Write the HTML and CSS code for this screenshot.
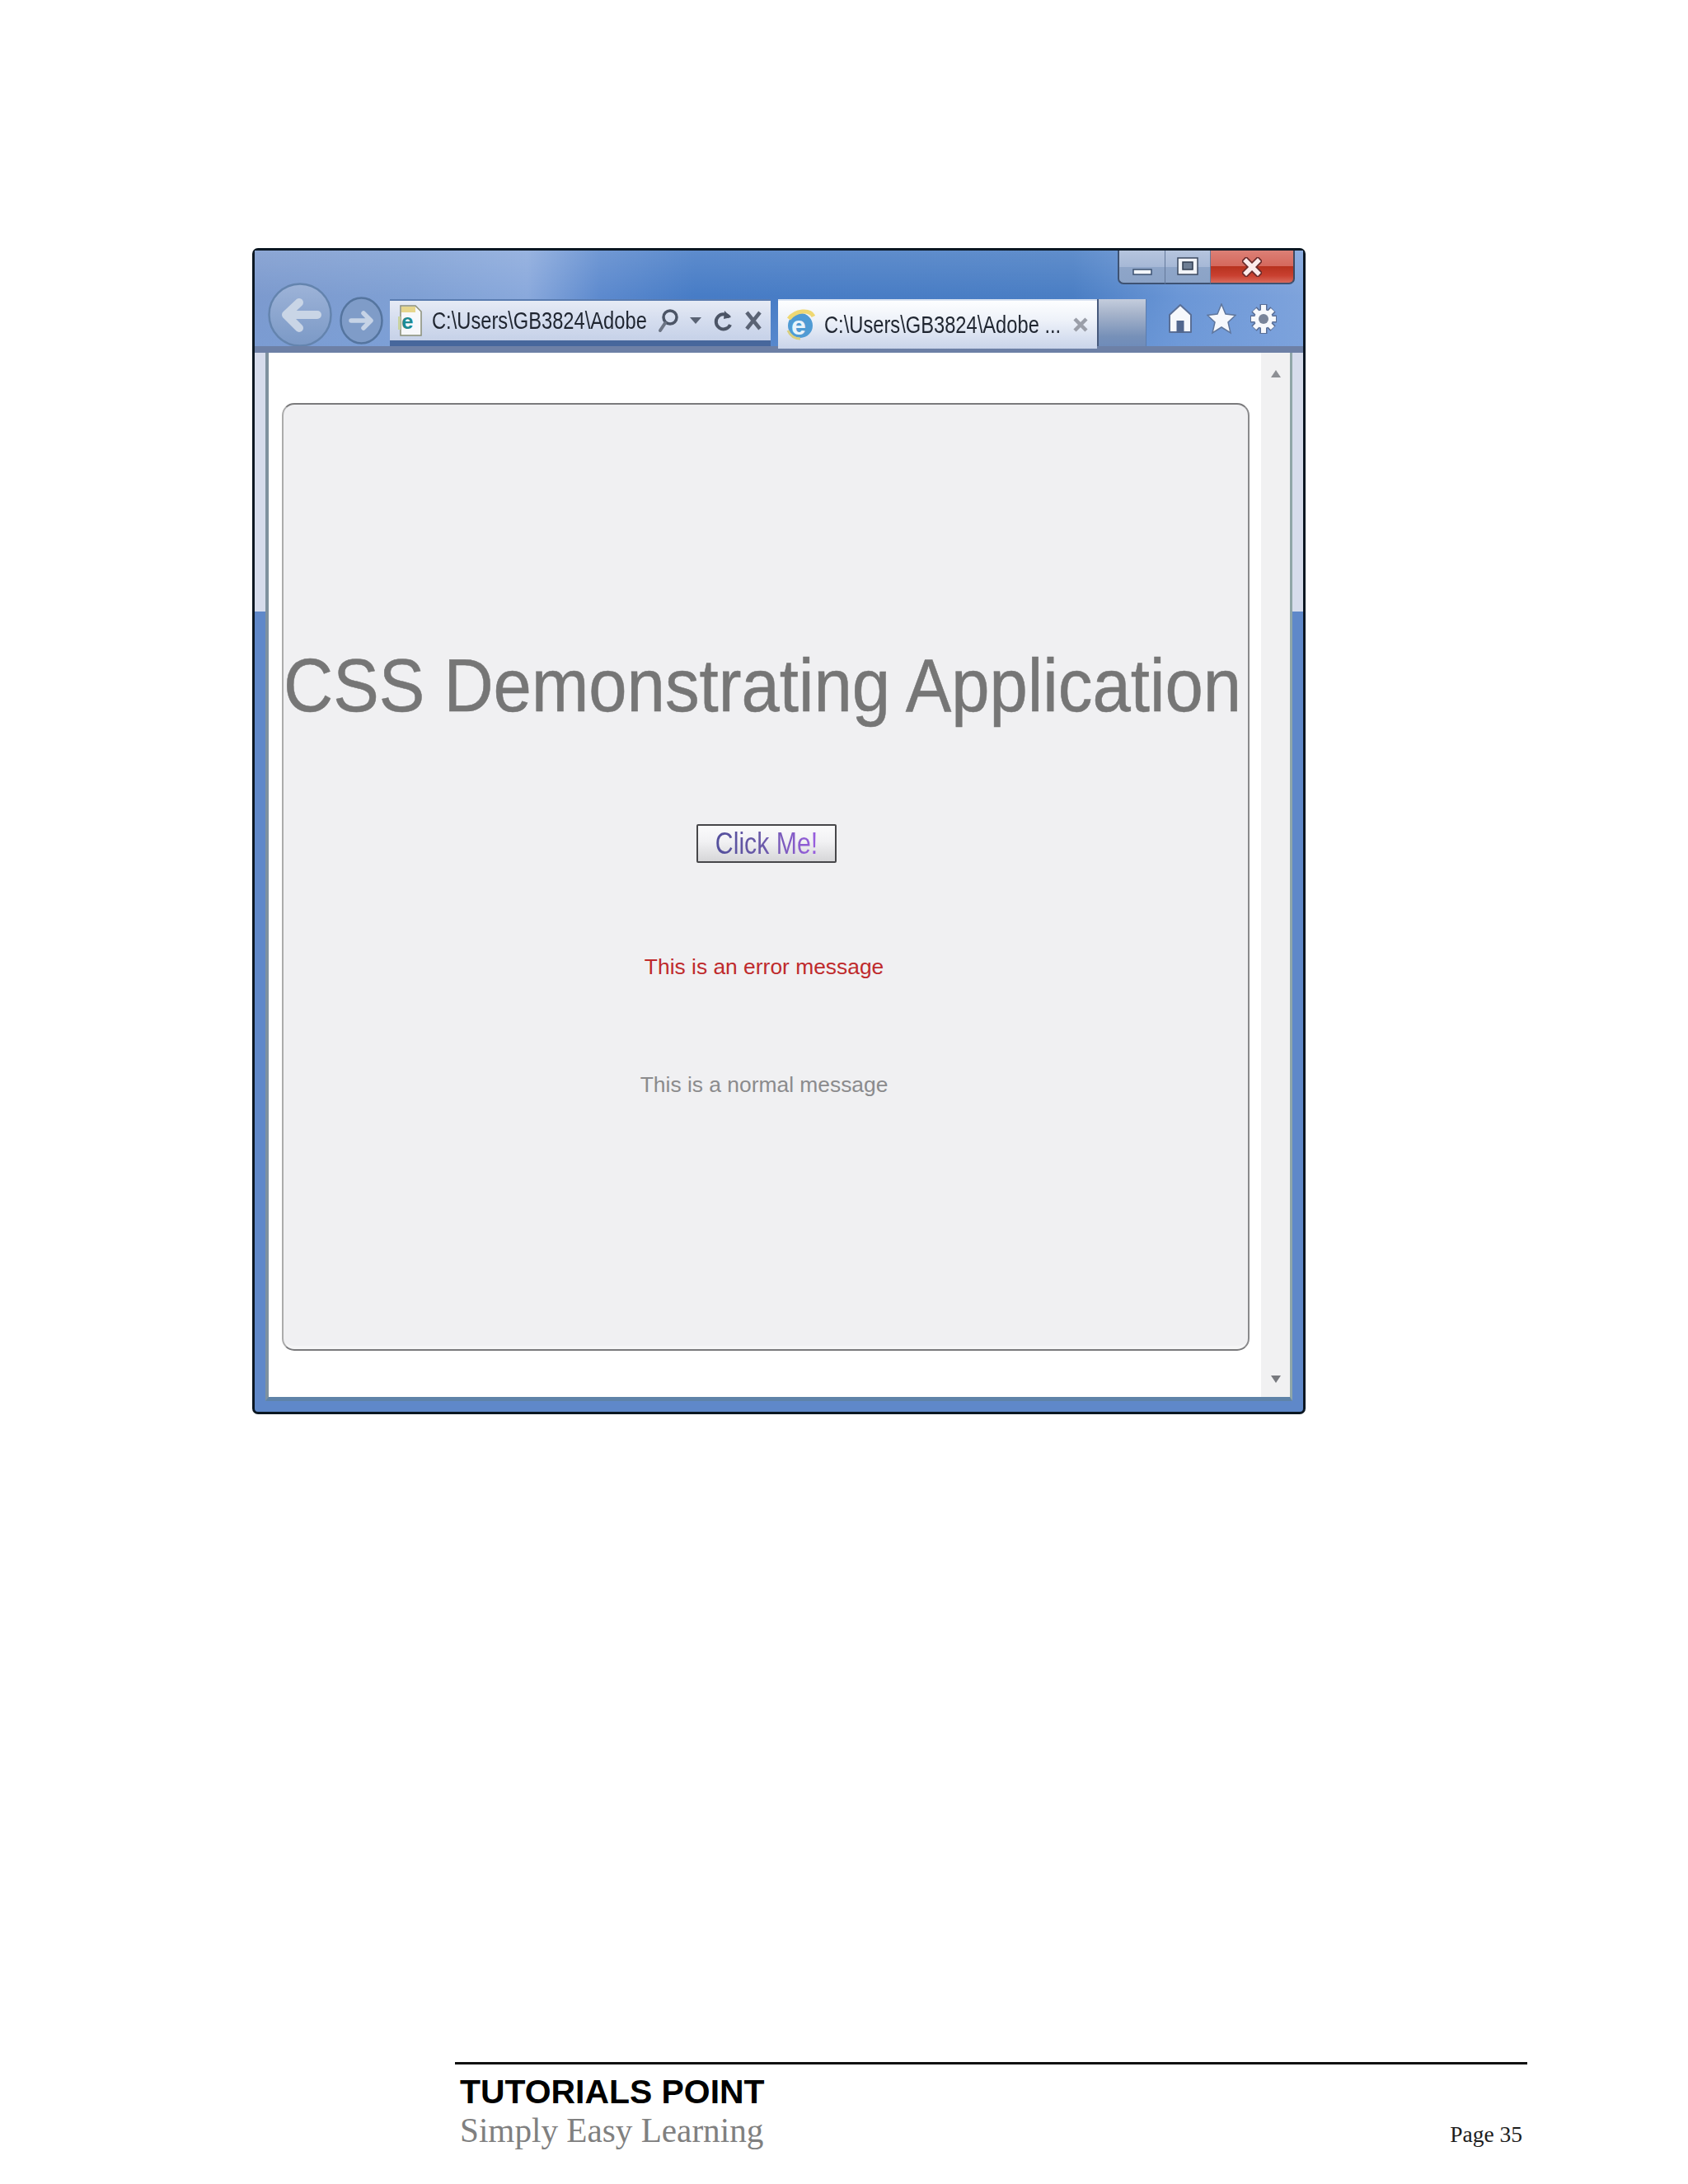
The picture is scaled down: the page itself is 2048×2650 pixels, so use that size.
FILE: index.html
```html
<!DOCTYPE html>
<html lang="en">
<head>
<meta charset="utf-8">
<title>TUTORIALS POINT - Page 35</title>
<link rel="stylesheet" href="styles.css">
</head>
<body>
<main class="page">
  <section class="window">
    <div class="chrome">
      <div class="caption">
        <div class="caption-btn min">
          <svg width="24" height="8" viewBox="0 0 24 8"><rect x="1" y="1" width="22" height="6" fill="#f2f6fb" stroke="#3c5272" stroke-width="1.5"/></svg>
        </div>
        <div class="caption-btn max">
          <svg width="26" height="22" viewBox="0 0 26 22"><rect x="1" y="1" width="24" height="20" fill="#f2f4f8" stroke="#3c4a60" stroke-width="1.5"/><rect x="7" y="6" width="12" height="9" fill="#6d7d93" stroke="#2f3c50" stroke-width="1.5"/></svg>
        </div>
        <div class="caption-btn close">
          <svg width="24" height="24" viewBox="0 0 24 24"><path d="M5 5 L19 19 M19 5 L5 19" stroke="#6a2a2a" stroke-width="9" stroke-linecap="square"/><path d="M5 5 L19 19 M19 5 L5 19" stroke="#fbeaea" stroke-width="5.5" stroke-linecap="square"/></svg>
        </div>
      </div>
      <div class="toolbar">
        <svg class="nav back" width="78" height="77" viewBox="0 0 78 77">
          <defs><linearGradient id="navfill" x1="0" y1="0" x2="0" y2="1"><stop offset="0" stop-color="#9db3d8"/><stop offset="1" stop-color="#7b99c6"/></linearGradient></defs>
          <circle cx="39" cy="39" r="37.5" fill="url(#navfill)" stroke="#6484ae" stroke-width="2.5"/>
          <path d="M60 39 H24 M38 24 L22 39 L38 55" fill="none" stroke="#c9d5e6" stroke-width="10" stroke-linecap="round" stroke-linejoin="round"/>
        </svg>
        <svg class="nav forward" width="53" height="58" viewBox="0 0 53 58">
          <ellipse cx="26.5" cy="29" rx="25" ry="27.5" fill="#7f9cc8" stroke="#55759f" stroke-width="2.5"/>
          <path d="M14 29 H37 M29 20 L38 29 L29 38" fill="none" stroke="#c6d3e6" stroke-width="5.5" stroke-linecap="round" stroke-linejoin="round"/>
        </svg>
        <div class="address">
          <svg class="page-icon" width="30" height="38" viewBox="0 0 30 38">
            <path d="M4 1 H22 L29 8 V37 H4 Z" fill="#f7f8fb" stroke="#8b8f78" stroke-width="1.5"/>
            <rect x="5" y="2" width="17" height="7" fill="#e6d68d"/>
            <path d="M1 14 L4 14 L4 30 L1 30 Z" fill="#c8d2a0"/>
            <text x="5" y="29" class="e-mark e-teal">e</text>
          </svg>
          <div class="addr-clip"><span class="squeezed">C:\Users\GB3824\Adobe</span></div>
          <svg class="ai search" width="26" height="30" viewBox="0 0 26 30"><circle cx="15" cy="11" r="8" fill="none" stroke="#4c5566" stroke-width="3.5"/><path d="M9 18 L3 27" stroke="#6c7484" stroke-width="4" stroke-linecap="round"/></svg>
          <svg class="ai drop" width="14" height="8" viewBox="0 0 14 8"><path d="M0 0 H14 L7 8 Z" fill="#5a6374"/></svg>
          <svg class="ai refresh" width="24" height="30" viewBox="0 0 24 30"><path d="M19 11 A9 9 0 1 0 20 20" fill="none" stroke="#4c5566" stroke-width="4"/><path d="M13 3 L21 11 L12 13 Z" fill="#4c5566"/></svg>
          <svg class="ai stop" width="22" height="26" viewBox="0 0 22 26"><path d="M3 3 L19 23 M19 3 L3 23" stroke="#5a6374" stroke-width="4.5"/></svg>
        </div>
        <div class="tab">
          <svg class="ie-icon" width="36" height="38" viewBox="0 0 36 38">
            <circle cx="18" cy="20" r="15" fill="#4f9bd4"/>
            <path d="M4 12 C12 1 30 0 34 9" fill="none" stroke="#efd873" stroke-width="5"/>
            <path d="M3 26 C6 33 12 36 18 36" fill="none" stroke="#d9cf7f" stroke-width="3"/>
            <text x="7" y="31" class="e-mark e-ie">e</text>
          </svg>
          <div class="tab-clip"><span class="squeezed">C:\Users\GB3824\Adobe ...</span></div>
          <svg class="tab-x" width="18" height="18" viewBox="0 0 18 18"><path d="M2 2 L16 16 M16 2 L2 16" stroke="#9a9ea8" stroke-width="4.5"/></svg>
        </div>
        <div class="new-tab"></div>
        <div class="tools">
          <svg width="34" height="40" viewBox="0 0 34 40"><path d="M17 3 L30 15 V36 H4 V15 Z" fill="#f6f8fc" stroke="#5a6f96" stroke-width="2" stroke-linejoin="round"/><rect x="12.5" y="22" width="9" height="15" fill="#51678f"/></svg>
          <svg width="36" height="38" viewBox="0 0 36 38"><path d="M18 1 L23 13 L35 14.5 L26 23 L29 36 L18 29 L7 36 L10 23 L1 14.5 L13 13 Z" fill="#f6f8fc" stroke="#5f769c" stroke-width="1.5"/></svg>
          <svg width="36" height="40" viewBox="0 0 36 40"><path d="M18 2 V38 M2 20 H34 M6.5 8.5 L29.5 31.5 M29.5 8.5 L6.5 31.5" stroke="#5a6f96" stroke-width="9"/><path d="M18 3 V37 M3 20 H33 M7 9 L29 31 M29 9 L7 31" stroke="#f6f8fc" stroke-width="6"/><circle cx="18" cy="20" r="11" fill="#f6f8fc"/><circle cx="18" cy="20" r="6" fill="#78849a"/></svg>
        </div>
      </div>
    </div>
    <div class="viewport">
      <div class="content">
        <div class="panel">
          <h1 class="title">CSS Demonstrating Application</h1>
          <button class="click" type="button"><span class="click-label">Click Me!</span></button>
          <p class="msg error">This is an error message</p>
          <p class="msg normal">This is a normal message</p>
        </div>
      </div>
      <div class="scrollbar">
        <svg width="12" height="9" viewBox="0 0 12 9"><path d="M6 0 L12 9 H0 Z" fill="#8d8f94"/></svg>
        <svg width="12" height="9" viewBox="0 0 12 9"><path d="M0 0 H12 L6 9 Z" fill="#77797e"/></svg>
      </div>
    </div>
  </section>
  <footer class="footer">
    <div class="brand">
      <div class="brand-name">TUTORIALS POINT</div>
      <div class="brand-tag">Simply Easy Learning</div>
    </div>
    <div class="page-no">Page 35</div>
  </footer>
</main>
</body>
</html>
```
FILE: styles.css
```css
* { box-sizing: border-box; }
html, body { margin: 0; padding: 0; background: #fff; }
body { width: 2048px; height: 2650px; overflow: hidden; font-family: "Liberation Sans", Arial, sans-serif; }
.page { padding: 301px 0 0 306px; }

.window {
  width: 1278px;
  height: 1415px;
  border: 3px solid #0b1722;
  border-radius: 7px;
  display: flex;
  flex-direction: column;
  background: linear-gradient(to bottom, #d6dcec 0, #d6dcec 438px, #5f88c9 438px, #5f88c9 100%);
}

.chrome {
  height: 124px;
  flex: none;
  background:
    linear-gradient(to bottom, rgba(255,255,255,.12) 0, rgba(255,255,255,0) 45%, rgba(120,160,220,.35) 100%),
    linear-gradient(to right, #7c9ace 0, #7fa0d4 15%, #8aa9dc 26%, #5d8ace 33%, #477cc6 42%, #4a7ec4 78%, #6a96d6 88%, #7ea3dc 100%);
}
.caption { height: 39px; display: flex; justify-content: flex-end; padding-right: 10px; }
.caption-btn {
  height: 41px;
  display: flex;
  justify-content: center;
  align-items: center;
  border-bottom: 2px solid #3e5272;
  border-right: 1px solid #64799b;
}
.caption-btn.min {
  width: 58px;
  padding-top: 12px;
  border-left: 2px solid #3e5272;
  border-bottom-left-radius: 7px;
  background: linear-gradient(to bottom, #b6c5de 0, #a6b8d6 50%, #8ea5c8 52%, #8ba3c7 100%);
}
.caption-btn.max {
  width: 55px;
  padding-bottom: 2px;
  background: linear-gradient(to bottom, #b6c5de 0, #a6b8d6 50%, #8ea5c8 52%, #8ba3c7 100%);
}
.caption-btn.close {
  width: 102px;
  border-right: 2px solid #3e4a60;
  border-bottom-right-radius: 7px;
  background: linear-gradient(to bottom, #dc8076 0, #d5685c 48%, #b8321f 50%, #c94030 78%, #d86a5c 100%);
}

.toolbar {
  height: 85px;
  display: flex;
  align-items: flex-start;
  padding-left: 16px;
  background: linear-gradient(to bottom, transparent 0, transparent 77px, #6d80a6 77px, #6d80a6 100%);
}
.nav { flex: none; display: block; }
.nav.forward { margin: 17px 0 0 9px; }
.address {
  width: 462px;
  height: 57px;
  margin: 20px 0 0 8px;
  display: flex;
  align-items: center;
  flex: none;
  border-top: 2px solid #5a7cb0;
  border-bottom: 7px solid #47679c;
  background: linear-gradient(to bottom, #e6ebf5 0, #d6deef 45%, #c6d1e8 100%);
}
.page-icon { margin-left: 9px; flex: none; }
.e-mark { font-family: "Liberation Sans", Arial, sans-serif; font-weight: 700; }
.e-teal { font-size: 26px; fill: #1d8a92; }
.e-ie { font-size: 32px; fill: #e9f4fb; }
.addr-clip { width: 262px; margin-left: 12px; overflow: hidden; flex: none; }
.squeezed {
  display: inline-block;
  font-size: 30px;
  line-height: 36px;
  color: #1f2530;
  white-space: nowrap;
  transform: scaleX(.79);
  transform-origin: left center;
}
.ai { flex: none; }
.search { margin-left: 12px; }
.drop { margin-left: 13px; }
.refresh { margin-left: 15px; }
.stop { margin-left: 13px; }

.tab {
  width: 387px;
  height: 60px;
  margin: 20px 0 0 9px;
  flex: none;
  display: flex;
  align-items: center;
  background: linear-gradient(to bottom, #fdfeff 0, #eef2f9 40%, #c9d4ea 100%);
  border-top: 2px solid #d9e3f2;
}
.ie-icon { margin-left: 9px; flex: none; }
.tab-clip { width: 300px; margin-left: 11px; overflow: hidden; flex: none; }
.tab-x { margin-left: 2px; flex: none; }
.new-tab {
  width: 60px;
  height: 57px;
  margin-top: 20px;
  flex: none;
  border-left: 2px solid #46597c;
  border-right: 1px solid #5c7cac;
  background: linear-gradient(to bottom, #c4cddd 0, #a7b4cb 30%, #7690b8 80%, #6f8cba 100%);
}
.tools {
  margin: 24px 0 0 24px;
  display: flex;
  align-items: center;
  gap: 15px;
}

.viewport {
  height: 1272px;
  flex: none;
  margin: 0 13px;
  display: flex;
  background: #fff;
  border-left: 4px solid #7e919f;
  border-right: 3px solid #8fa6a8;
  border-bottom: 5px solid #5f83a8;
}
.content { flex: 1; padding: 61px 14px 0 16px; }
.panel {
  height: 1150px;
  border: 2px solid #7a7a7c;
  border-left-color: #ababab;
  border-right-color: #8a8a8c;
  border-radius: 15px;
  background: #f0f0f2;
  box-shadow: inset 0 -10px 0 -6px #f5f5f6;
  padding-top: 291px;
  display: flex;
  flex-direction: column;
  align-items: center;
}
.title {
  margin: 0 8px 0 0;
  font-size: 83.3px;
  line-height: 100px;
  font-weight: 400;
  color: #767676;
  -webkit-text-stroke: .5px #767676;
  white-space: nowrap;
  transform: scaleY(1.1);
}
.click {
  width: 170px;
  height: 47px;
  margin: 118px 0 0 2px;
  padding: 0;
  border: 2px solid #47474a;
  border-radius: 2px;
  background: linear-gradient(to bottom, #fbfbfc 0, #f1f1f3 45%, #d6d6d8 100%);
  font-family: inherit;
}
.click-label {
  display: inline-block;
  font-size: 36px;
  line-height: 40px;
  background: linear-gradient(to right, #534f9c 0, #6a5aa8 45%, #9a5ee0 100%);
  -webkit-background-clip: text;
  background-clip: text;
  color: transparent;
  transform: scaleX(.84);
}
.msg {
  margin: 0 4px 0 0;
  font-size: 26.4px;
  line-height: 30px;
  white-space: nowrap;
}
.error { margin-top: 111px; color: #bf2a2c; }
.normal { margin-top: 113px; color: #8b8b8d; }

.scrollbar {
  width: 35px;
  flex: none;
  display: flex;
  flex-direction: column;
  align-items: center;
  justify-content: space-between;
  padding: 21px 0 17px;
  background: #f1f1f2;
}

.footer {
  width: 1301px;
  margin: 786px 0 0 246px;
  padding: 11px 6px 0;
  border-top: 3px solid #111;
  display: flex;
  justify-content: space-between;
  align-items: flex-end;
}
.brand-name {
  font-size: 40.9px;
  line-height: 44px;
  font-weight: 700;
  color: #000;
}
.brand-tag {
  margin-top: 3px;
  font-family: "Liberation Serif", "Times New Roman", serif;
  font-size: 41.2px;
  line-height: 44px;
  color: #808080;
}
.page-no {
  margin-bottom: -5px;
  font-family: "Liberation Serif", "Times New Roman", serif;
  font-size: 27.5px;
  line-height: 44px;
  color: #1c1c1c;
}
```
